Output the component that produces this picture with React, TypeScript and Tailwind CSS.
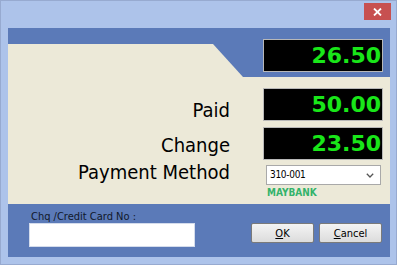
import React from 'react';

const tahoma = "font-['DejaVu_Sans_Condensed','Liberation_Sans',sans-serif]";

const Display: React.FC<{ value: string }> = ({ value }) => (
  <div className="w-[120px] h-[33px] bg-black border border-[#b8b8b8] flex items-center justify-end pr-[1px] font-['DejaVu_Sans',sans-serif] font-bold text-[22px] leading-none text-[#19e619]">
    {value}
  </div>
);

const DialogButton: React.FC<{ hotkey: string; rest: string }> = ({ hotkey, rest }) => (
  <button
    className={`w-[63px] h-[20px] border border-[#7a7a7a] rounded-[2px] bg-gradient-to-b from-[#f4f4f4] to-[#dcdcdc] text-[11px] leading-none text-black ${tahoma}`}
  >
    <span className="underline">{hotkey}</span>
    {rest}
  </button>
);

export default function App() {
  return (
    <div className="w-[397px] h-[265px] bg-[#adc3ea] border border-[#97aad0] flex flex-col">
      {/* title bar */}
      <div className="h-[27px] flex justify-end items-start pr-[5px] pt-[2px]">
        <div className="w-[27px] h-[17px] bg-[#c75050] flex items-center justify-center">
          <svg width="9" height="8" viewBox="0 0 9 8">
            <path d="M1 0.5 L8 7.5 M8 0.5 L1 7.5" stroke="white" strokeWidth="1.8" />
          </svg>
        </div>
      </div>

      <div className="mx-[7px] w-[382px] h-[229px] flex flex-col bg-[#ece9d8]">
        {/* top band with the amount due */}
        <div className="h-[49px] flex bg-[#5b7ab8]">
          <div className="w-[235px] flex flex-col">
            <div className="h-[16px]" />
            <div className="flex-1 bg-[#ece9d8] [clip-path:polygon(0_0,205px_0,235px_100%,0_100%)]" />
          </div>
          <div className="flex-1" />
          <div className="mt-[11px] mr-[7px]">
            <Display value="26.50" />
          </div>
        </div>

        {/* amounts */}
        <div className={`flex-1 flex flex-col text-black ${tahoma}`}>
          <div className="mt-[11px] flex">
            <div className="w-[222px] mt-[12px] text-right text-[20px] leading-[20px]">Paid</div>
            <div className="ml-[33px]">
              <Display value="50.00" />
            </div>
          </div>
          <div className="mt-[6px] flex">
            <div className="w-[222px] mt-[8px] text-right text-[20px] leading-[20px]">Change</div>
            <div className="ml-[33px]">
              <Display value="23.50" />
            </div>
          </div>
          <div className="mt-[2px] flex">
            <div className="w-[222px] text-right text-[20px] leading-[20px]">Payment Method</div>
            <div className="ml-[36px] mt-[3px] w-[115px] h-[20px] bg-white border border-[#a9a9a9] flex items-center justify-between pl-[3px] pr-[6px]">
              <span className="text-[10px] leading-none tracking-[-0.3px]">310-001</span>
              <svg width="8" height="5" viewBox="0 0 8 5">
                <path d="M0.8 0.8 L4 4 L7.2 0.8" stroke="#555" strokeWidth="1.3" fill="none" />
              </svg>
            </div>
          </div>
          <div className="ml-[259px] mt-[3px] text-[10px] leading-[10px] font-bold text-[#33b36a]">MAYBANK</div>
        </div>

        {/* card number and buttons */}
        <div className={`h-[53px] bg-[#5b7ab8] flex flex-col ${tahoma}`}>
          <div className="pl-[23px] pt-[7px] h-[19px] text-[11px] leading-[12px] text-[#10182a]">Chq /Credit Card No :</div>
          <div className="flex items-start pl-[21px] pr-[8px]">
            <div className="w-[166px] h-[24px] bg-white border border-[#d4dcec]" />
            <div className="flex-1" />
            <div className="flex gap-[5px]">
              <DialogButton hotkey="O" rest="K" />
              <DialogButton hotkey="C" rest="ancel" />
            </div>
          </div>
        </div>
      </div>
    </div>
  );
}
